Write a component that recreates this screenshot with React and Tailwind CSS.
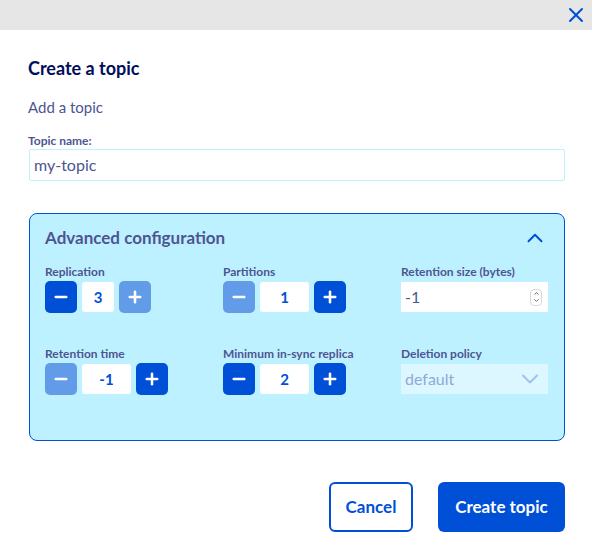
import React, { useState } from "react";
import { X, ChevronUp, ChevronDown, Minus, Plus } from "lucide-react";

const font = { fontFamily: '"Source Sans Pro", Lato, "Noto Sans", sans-serif' };

const Stepper = ({ value, wide, minusOff, plusOff }) => (
  <div className="flex items-center gap-[5px] mt-[2px]">
    <button
      className={`w-8 h-8 rounded-[5px] flex items-center justify-center text-white ${
        minusOff ? "bg-[#629ce9]" : "bg-[#0050d7]"
      }`}
    >
      <Minus className="w-[18px] h-[18px]" strokeWidth={3.4} />
    </button>
    <div
      className={`h-[30px] ${
        wide ? "w-[49px]" : "w-8"
      } bg-white rounded-[3px] flex items-center justify-center text-[15px] font-bold text-[#0050d7]`}
    >
      {value}
    </div>
    <button
      className={`w-8 h-8 rounded-[5px] flex items-center justify-center text-white ${
        plusOff ? "bg-[#629ce9]" : "bg-[#0050d7]"
      }`}
    >
      <Plus className="w-[18px] h-[18px]" strokeWidth={3.4} />
    </button>
  </div>
);

const Label = ({ children }) => (
  <p className="text-[12px] leading-[14px] font-bold text-[#4d5592]">{children}</p>
);

export default function App() {
  const [name] = useState("my-topic");

  return (
    <div className="w-[592px] h-[550px] bg-white" style={font}>
      {/* top bar */}
      <div className="h-[30px] bg-[#e6e6e6] flex items-center justify-end pr-[4px]">
        <X className="w-[24px] h-[24px] text-[#0050d7]" strokeWidth={2} />
      </div>

      <div className="px-[28px] pr-[27px]">
        <h2 className="mt-[26px] text-[18px] leading-6 font-bold text-[#000e5c]">Create a topic</h2>
        <p className="mt-[17px] text-[15px] leading-5 text-[#4d5592]">Add a topic</p>

        <p className="mt-[17px] text-[12px] leading-[14px] font-bold text-[#4d5592]">Topic name:</p>
        <div className="mt-[1px] ml-px h-[32px] border border-[#bef1ff] rounded-[2px] flex items-center px-[4px] text-[16px] text-[#4d5592]">
          {name}
        </div>

        {/* advanced config */}
        <div className="mt-[32px] ml-px bg-[#bef1ff] border border-[#0050d7] rounded-[8px]">
          <div className="h-[48px] flex items-center justify-between pl-[15px] pr-[16px]">
            <span className="text-[17px] font-bold text-[#4d5592]">Advanced configuration</span>
            <ChevronUp className="w-[26px] h-[26px] text-[#0050d7]" strokeWidth={1.8} />
          </div>
          <div className="pl-[15px] pt-[3px] pb-[45px] grid grid-cols-[147px_147px_147px] gap-x-[31px] gap-y-[34px]">
            <div>
              <Label>Replication</Label>
              <Stepper value="3" plusOff />
            </div>
            <div>
              <Label>Partitions</Label>
              <Stepper value="1" wide minusOff />
            </div>
            <div>
              <Label>Retention size (bytes)</Label>
              <div className="mt-[3px] h-[30px] bg-white flex items-center justify-between pl-[4px] pr-[6px] text-[16px] text-[#4d5592]">
                <span>-1</span>
                <span className="w-[12px] h-[17px] rounded-[4px] border border-[#d8d8d8] flex flex-col items-center justify-center">
                  <ChevronUp className="w-[9px] h-[7px] text-[#555]" strokeWidth={3} />
                  <ChevronDown className="w-[9px] h-[7px] text-[#555]" strokeWidth={3} />
                </span>
              </div>
            </div>
            <div>
              <Label>Retention time</Label>
              <Stepper value="-1" wide minusOff />
            </div>
            <div>
              <Label>Minimum in-sync replica</Label>
              <Stepper value="2" wide />
            </div>
            <div>
              <Label>Deletion policy</Label>
              <div className="mt-[3px] h-[30px] bg-[#dcf7ff] flex items-center justify-between pl-[4px] pr-[4px] text-[16px] text-[#8ea9dc]">
                <span>default</span>
                <ChevronDown className="w-[28px] h-[28px] text-[#9ec0ef]" strokeWidth={1.6} />
              </div>
            </div>
          </div>
        </div>

        {/* footer */}
        <div className="mt-[41px] flex justify-end gap-[25px]">
          <button className="h-[50px] w-[84px] border-2 border-[#0050d7] rounded-[6px] text-[17px] font-bold text-[#0050d7]">
            Cancel
          </button>
          <button className="h-[50px] w-[127px] bg-[#0050d7] rounded-[6px] text-[17px] font-bold text-white">
            Create topic
          </button>
        </div>
      </div>
    </div>
  );
}
